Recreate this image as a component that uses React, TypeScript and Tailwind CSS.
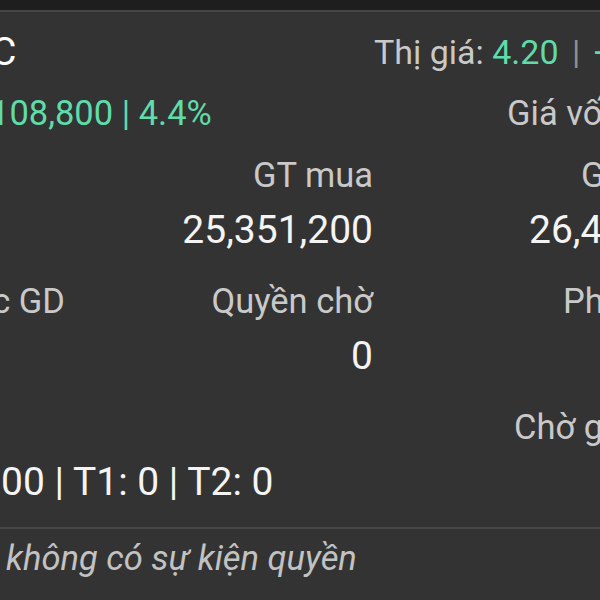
import React from 'react';

function App() {
  return (
    <div className="w-[600px] h-[600px] overflow-hidden bg-[#333333] font-['Roboto',sans-serif] flex flex-col">
      {/* Top bar */}
      <div className="h-[10px] shrink-0 bg-[#1e1e1e]" />
      <div className="h-[2px] shrink-0 bg-[#464646]" />

      {/* Summary */}
      <div className="grid grid-cols-[373px_227px] mt-[18px] whitespace-nowrap">
        <div className="text-[39px] leading-[44px] text-white -ml-[9px]">C</div>
        <div className="text-[34px] leading-[44px] text-[#c9c9c9] ml-[1px]">
          Thị giá: <span className="text-[#5fdcaa]">4.20</span>
          <span className="text-[#8f8f8f] ml-[5px]"> | </span>
          <span className="text-[#5fdcaa] ml-[5px]">+</span>
        </div>
        <div className="text-[34.5px] leading-[44px] text-[#5fdcaa] -ml-[10px] mt-[17px]">108,800 | 4.4%</div>
        <div className="text-[34.5px] leading-[44px] text-[#c9c9c9] ml-[134px] mt-[17px]">Giá vốn</div>
      </div>

      {/* Details grid */}
      <div className="grid grid-cols-[65px_308px_227px] gap-y-[18px] mt-[17px] whitespace-nowrap">
        {/* Row 1 */}
        <div />
        <div className="flex flex-col items-end">
          <span className="text-[34.5px] leading-[46px] text-[#c9c9c9]">GT mua</span>
          <span className="text-[39px] leading-[60px] mt-[2px] text-[#f4f4f4]">25,351,200</span>
        </div>
        <div className="flex flex-col">
          <span className="text-[34.5px] leading-[46px] text-[#c9c9c9] ml-[208px]">GT bán</span>
          <span className="text-[39px] leading-[60px] mt-[2px] text-[#f4f4f4] ml-[156px]">26,4</span>
        </div>

        {/* Row 2 */}
        <div className="flex flex-col items-end">
          <span className="text-[34.5px] leading-[46px] text-[#c9c9c9]">c GD</span>
        </div>
        <div className="flex flex-col items-end">
          <span className="text-[34.5px] leading-[46px] text-[#c9c9c9]">Quyền chờ</span>
          <span className="text-[39px] leading-[60px] mt-[2px] text-[#f4f4f4]">0</span>
        </div>
        <div className="flex flex-col">
          <span className="text-[34.5px] leading-[46px] text-[#c9c9c9] ml-[190px]">Phí</span>
        </div>

        {/* Row 3 */}
        <div className="col-span-2 h-[46px]" />
        <div className="flex flex-col">
          <span className="text-[34.5px] leading-[46px] text-[#c9c9c9] ml-[141px]">Chờ giao</span>
        </div>
        <div className="col-span-3 -mt-[16px] ml-[1px] text-[39px] leading-[60px] text-[#f4f4f4]">
          00 | T1: 0 | T2: 0
        </div>
      </div>

      {/* Rights events */}
      <div className="mt-[15px] border-t-2 border-[#474747] pt-[7px] pl-[6px]">
        <p className="text-[34.5px] leading-[44px] italic text-[#c2c2c2]">không có sự kiện quyền</p>
      </div>
    </div>
  );
}

export default App;
